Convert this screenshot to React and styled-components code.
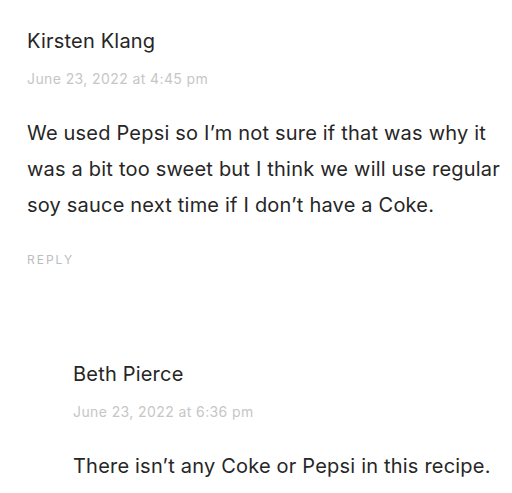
import styled, { createGlobalStyle } from "styled-components";

const GlobalStyle = createGlobalStyle`
  body {
    margin: 0;
    background: #ffffff;
    font-family: Inter, "Noto Sans", sans-serif;
    color: #1f1f1f;
  }
`;

const Thread = styled.div`
  padding: 27px 0 0 27px;
  display: flex;
  flex-direction: column;
`;

const Comment = styled.div`
  display: flex;
  flex-direction: column;
  padding-left: ${(p) => (p.$reply ? "46px" : "0")};
  margin-top: ${(p) => (p.$reply ? "93px" : "0")};
`;

const Author = styled.div`
  font-size: 20px;
  line-height: 28px;
  letter-spacing: 0.2px;
  color: #262626;
`;

const Date = styled.div`
  margin-top: 15px;
  font-size: 14px;
  line-height: 18px;
  color: #c6c6c6;
  letter-spacing: 0.4px;
`;

const Body = styled.p`
  margin: 27px 0 0;
  font-size: 20px;
  line-height: 36px;
  letter-spacing: 0.2px;
  white-space: nowrap;
  color: #262626;
`;

const ReplyLink = styled.div`
  margin-top: 29px;
  font-size: 12px;
  letter-spacing: 2px;
  color: #bdbdbd;
`;

const App = () => {
  return (
    <>
      <GlobalStyle />
      <Thread>
        <Comment>
          <Author>Kirsten Klang</Author>
          <Date>June 23, 2022 at 4:45 pm</Date>
          <Body>
            We used Pepsi so I’m not sure if that was why it
            <br />
            was a bit too sweet but I think we will use regular
            <br />
            soy sauce next time if I don’t have a Coke.
          </Body>
          <ReplyLink>REPLY</ReplyLink>
        </Comment>
        <Comment $reply>
          <Author>Beth Pierce</Author>
          <Date>June 23, 2022 at 6:36 pm</Date>
          <Body>There isn’t any Coke or Pepsi in this recipe.</Body>
        </Comment>
      </Thread>
    </>
  );
};

export default App;
